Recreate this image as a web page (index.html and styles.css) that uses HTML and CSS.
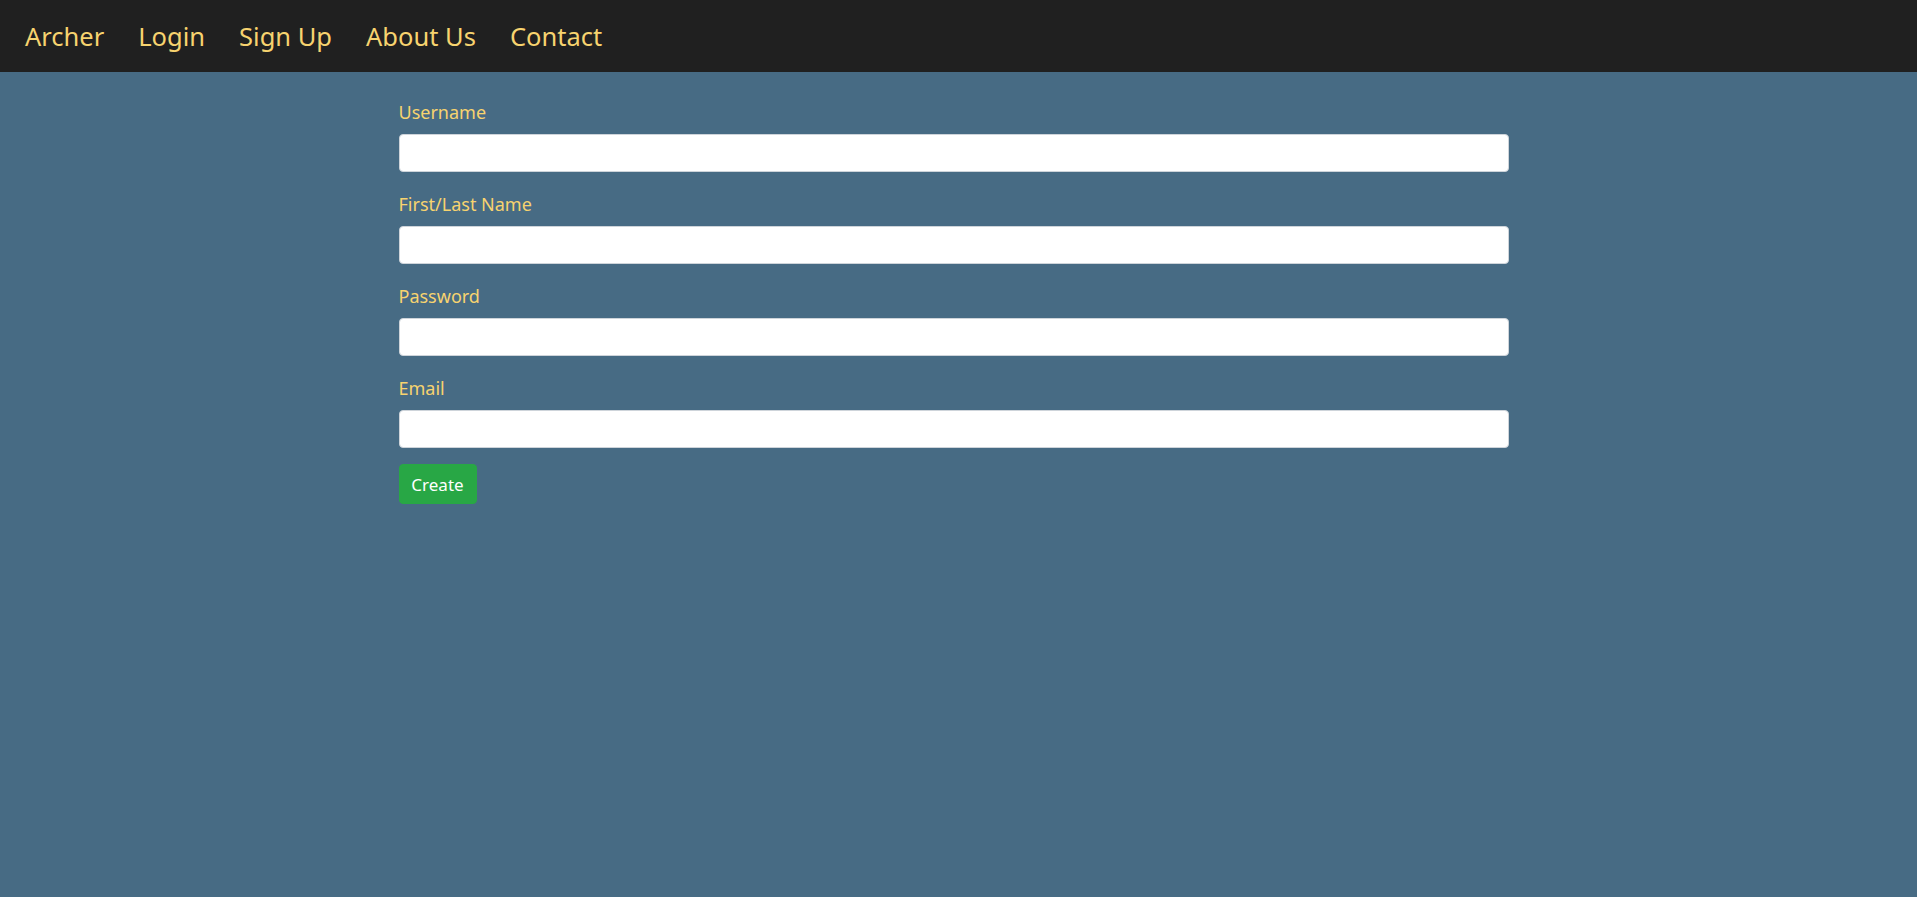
FILE: index.html
```html
<!DOCTYPE html>
<html lang="en">
<head>
<meta charset="utf-8">
<title>Archer - Sign Up</title>
<link rel="stylesheet" href="styles.css">
</head>
<body>
<nav class="navbar">
  <a class="nav-link" href="#">Archer</a>
  <a class="nav-link" href="#">Login</a>
  <a class="nav-link" href="#">Sign Up</a>
  <a class="nav-link" href="#">About Us</a>
  <a class="nav-link" href="#">Contact</a>
</nav>
<main class="container">
  <form class="form">
    <div class="form-group">
      <label class="label" for="username">Username</label>
      <input class="input" id="username" type="text">
    </div>
    <div class="form-group">
      <label class="label" for="name">First/Last Name</label>
      <input class="input" id="name" type="text">
    </div>
    <div class="form-group">
      <label class="label" for="password">Password</label>
      <input class="input" id="password" type="password">
    </div>
    <div class="form-group">
      <label class="label" for="email">Email</label>
      <input class="input" id="email" type="email">
    </div>
    <button class="btn" type="button">Create</button>
  </form>
</main>
</body>
</html>
```
FILE: styles.css
```css
html, body {
  margin: 0;
  padding: 0;
  height: 100%;
}
body {
  background: #476b84;
  font-family: "Noto Sans", "Open Sans", sans-serif;
}
.navbar {
  background: #202020;
  height: 72px;
  display: flex;
  align-items: center;
  gap: 34px;
  padding: 1px 0 0 25px;
  box-sizing: border-box;
}
.nav-link {
  color: #f7d36f;
  text-decoration: none;
  font-size: 25.5px;
  line-height: 1;
}
.container {
  width: 1110px;
  margin-left: calc(50% - 560px);
  padding-top: 26px;
}
.form {
  display: flex;
  flex-direction: column;
  align-items: flex-start;
}
.form-group {
  display: flex;
  flex-direction: column;
  align-self: stretch;
  margin-bottom: 18px;
}
.label {
  color: #f7d36f;
  font-size: 18px;
  line-height: 28px;
  margin-bottom: 8px;
}
.input {
  height: 38px;
  box-sizing: border-box;
  border: 1px solid #ced4da;
  border-radius: 4px;
  background: #fff;
  padding: 6px 12px;
  font-size: 16px;
  margin: 0;
}
.btn {
  background: #28a745;
  color: #fff;
  border: 1px solid #28a745;
  border-radius: 4px;
  font-family: inherit;
  font-size: 17px;
  height: 40px;
  width: 78px;
  padding: 0;
  margin-top: -2px;
}
```
